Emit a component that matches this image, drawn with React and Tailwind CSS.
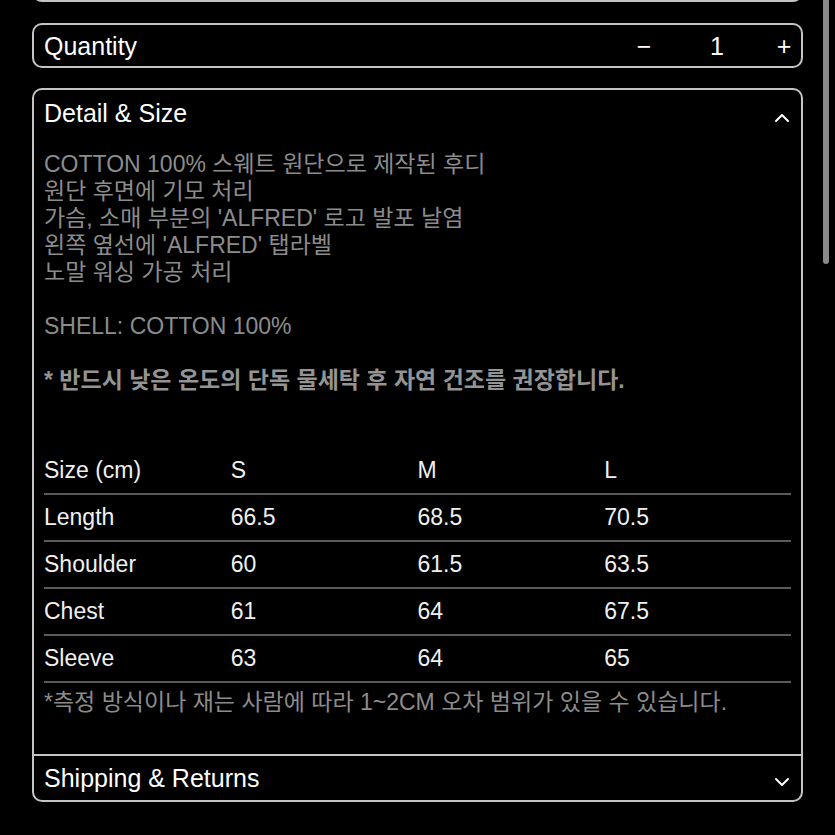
import React from "react";

const rows = [
  ["Length", "66.5", "68.5", "70.5"],
  ["Shoulder", "60", "61.5", "63.5"],
  ["Chest", "61", "64", "67.5"],
  ["Sleeve", "63", "64", "65"],
];

function Chevron({ up }) {
  return (
    <svg width="16" height="10" viewBox="0 0 16 10" className="block">
      <polyline
        points={up ? "2,8 8,2 14,8" : "2,2 8,8 14,2"}
        fill="none"
        stroke="#ffffff"
        strokeWidth="2"
        strokeLinecap="round"
        strokeLinejoin="round"
      />
    </svg>
  );
}

export default function App() {
  return (
    <div className="relative w-[835px] h-[835px] overflow-hidden bg-black font-['Liberation_Sans','Noto_Sans_CJK_KR',sans-serif]">
      <div className="absolute right-[6px] top-0 w-[6px] h-[264px] rounded-b-full bg-[#8a8a8a]" />
      <div className="pl-[32px] w-[803px]">
        <div className="h-[20px] -mt-[18px] border-2 border-[#c4c4c4] rounded-[10px]" />

        <div className="mt-[21px] h-[45px] border-2 border-[#c4c4c4] rounded-[10px] flex items-center pl-[10px] pr-[7px]">
          <span className="text-[25px] leading-[28px] text-white">Quantity</span>
          <div className="ml-auto flex items-center text-white text-[25px] leading-[28px]">
            <span className="w-[20px] text-center">−</span>
            <span className="w-[20px] ml-[53px] text-center">1</span>
            <span className="w-[20px] ml-[47px] text-center">+</span>
          </div>
        </div>

        <div className="mt-[20px] border-2 border-[#c4c4c4] rounded-[10px]">
          <div className="flex items-center pt-[9px] pl-[10px] pr-[10px] h-[37px]">
            <span className="text-[25px] leading-[28px] text-white">Detail &amp; Size</span>
            <span className="ml-auto mt-[10px] mr-[1px]">
              <Chevron up />
            </span>
          </div>

          <div className="px-[10px] pt-[24px]">
            <div className="text-[23px] leading-[27px] text-[#8c8c8c]">
              <p>COTTON 100% 스웨트 원단으로 제작된 후디</p>
              <p>원단 후면에 기모 처리</p>
              <p>가슴, 소매 부분의 'ALFRED' 로고 발포 날염</p>
              <p>왼쪽 옆선에 'ALFRED' 탭라벨</p>
              <p>노말 워싱 가공 처리</p>
              <p className="mt-[27px]">SHELL: COTTON 100%</p>
              <p className="mt-[27px] font-bold text-[#949494]">* 반드시 낮은 온도의 단독 물세탁 후 자연 건조를 권장합니다.</p>
            </div>

            <div className="mt-[54px] text-[23px] leading-[27px] text-[#f0f0f0]">
              <div className="grid grid-cols-4 h-[47px] items-center border-b-2 border-[#5a5a5a]">
                <span>Size (cm)</span>
                <span>S</span>
                <span>M</span>
                <span>L</span>
              </div>
              {rows.map((r) => (
                <div
                  key={r[0]}
                  className="grid grid-cols-4 h-[47px] items-center border-b-2 border-[#5a5a5a]"
                >
                  {r.map((c, i) => (
                    <span key={i}>{c}</span>
                  ))}
                </div>
              ))}
            </div>

            <p className="pt-[6px] pb-[38px] text-[23px] leading-[27px] text-[#8c8c8c]">
              *측정 방식이나 재는 사람에 따라 1~2CM 오차 범위가 있을 수 있습니다.
            </p>
          </div>

          <div className="border-t-2 border-[#c4c4c4] h-[46px] flex items-center pl-[10px] pr-[10px]">
            <span className="text-[25px] leading-[28px] text-white">Shipping &amp; Returns</span>
            <span className="ml-auto mt-[8px] mr-[1px]">
              <Chevron />
            </span>
          </div>
        </div>
      </div>
    </div>
  );
}
